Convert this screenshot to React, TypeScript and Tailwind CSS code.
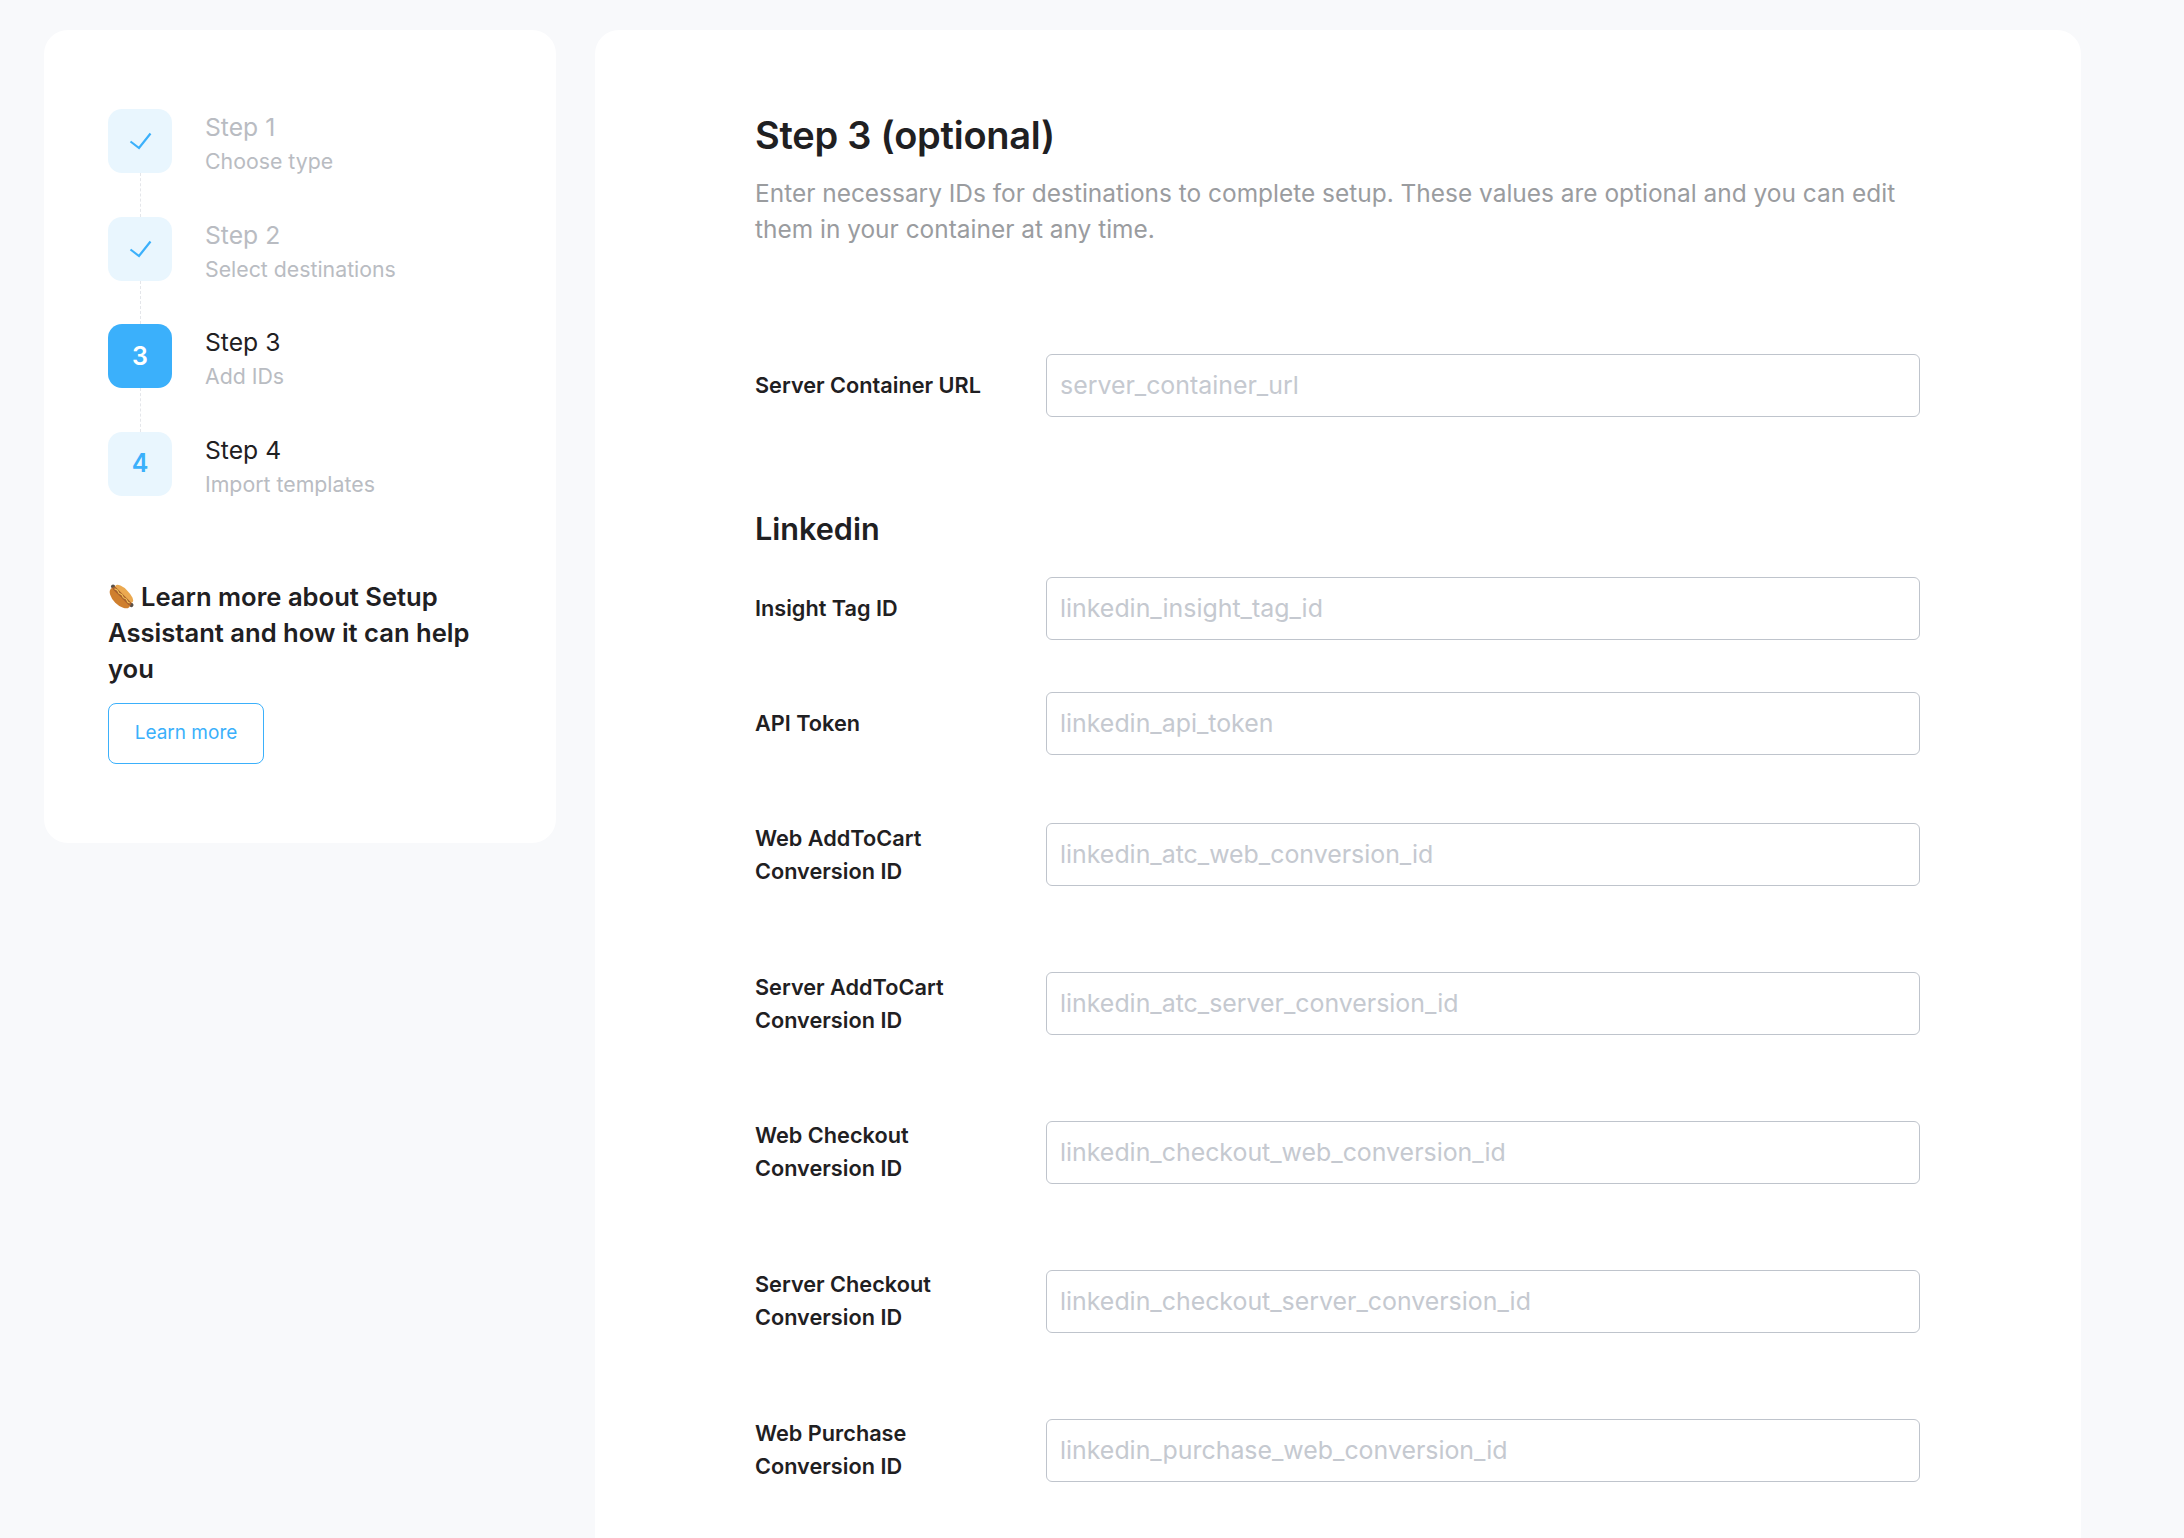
import React from "react";

const steps = [
  { title: "Step 1", sub: "Choose type", state: "done" },
  { title: "Step 2", sub: "Select destinations", state: "done" },
  { title: "Step 3", sub: "Add IDs", state: "active" },
  { title: "Step 4", sub: "Import templates", state: "todo" },
];

const fields = [
  { label: ["Insight Tag ID"], ph: "linkedin_insight_tag_id" },
  { label: ["API Token"], ph: "linkedin_api_token" },
  { label: ["Web AddToCart", "Conversion ID"], ph: "linkedin_atc_web_conversion_id" },
  { label: ["Server AddToCart", "Conversion ID"], ph: "linkedin_atc_server_conversion_id" },
  { label: ["Web Checkout", "Conversion ID"], ph: "linkedin_checkout_web_conversion_id" },
  { label: ["Server Checkout", "Conversion ID"], ph: "linkedin_checkout_server_conversion_id" },
  { label: ["Web Purchase", "Conversion ID"], ph: "linkedin_purchase_web_conversion_id" },
];

function Check() {
  return (
    <svg width="23" height="18" viewBox="0 0 23 18" fill="none">
      <path d="M1.5 9.5L10 16L21.5 1.500" stroke="#3bb0fb" strokeWidth="2.200" />
    </svg>
  );
}

function HotDog() {
  return (
    <svg width="27" height="27" viewBox="0 0 26 26" className="inline-block align-[-4px] mr-[6px]">
      <g transform="rotate(45 13 13)">
        <circle cx="0.500" cy="12" r="2" fill="#5a5148" />
        <circle cx="25.500" cy="12" r="2" fill="#5a5148" />
        <ellipse cx="13" cy="15" rx="12.500" ry="6.500" fill="#cf7f2e" />
        <ellipse cx="13" cy="9.500" rx="11.500" ry="4.500" fill="#eba950" />
        <rect x="1" y="10.500" width="24" height="3.500" rx="1.750" fill="#a9602c" />
        <path d="M3 12.500l3-1 3 1 3-1 3 1 3-1 3 1 2-.7" stroke="#f3c65a" strokeWidth="1" fill="none" />
      </g>
    </svg>
  );
}

function Field({ label, ph }: { label: string[]; ph: string }) {
  return (
    <div className={label.length > 1 ? "flex items-center h-[96.8px]" : "flex items-center h-[63px]"}>
      <div className="w-[291px] shrink-0 text-[21.7px] leading-[33px] font-semibold text-[#1f2022]">
        {label.map((l) => (
          <div key={l}>{l}</div>
        ))}
      </div>
      <input
        readOnly
        placeholder={ph}
        className="w-[874px] h-[63px] rounded-[6px] border border-[#bfc4cc] bg-white px-[13px] pb-[1px] text-[24.9px] outline-none placeholder:text-[#c5c9d0]"
      />
    </div>
  );
}

export default function App() {
  return (
    <div className="h-screen overflow-hidden bg-[#f8f9fb] pt-[30px] pl-[44px] font-['Inter',sans-serif] text-[#1f2022]">
      <div className="flex items-start gap-[39px]">
        <aside className="w-[512px] h-[813px] shrink-0 rounded-[24px] bg-white pt-[79px] pl-[64px] pr-[64px]">
          <div className="flex flex-col">
            {steps.map((s, i) => (
              <div key={s.title} className="flex">
                <div className="flex flex-col items-center w-[64px]">
                  <div
                    className={
                      s.state === "active"
                        ? "w-[64px] h-[64px] rounded-[14px] flex items-center justify-center bg-[#3bb0fb] text-white text-[25px] font-semibold"
                        : "w-[64px] h-[64px] rounded-[14px] flex items-center justify-center bg-[#e9f6fe] text-[#3bb0fb] text-[25px] font-semibold"
                    }
                  >
                    {s.state === "done" ? <Check /> : i + 1}
                  </div>
                  {i < 3 && <div className="h-[43.7px] border-l border-dashed border-[#e4e6ea]" />}
                </div>
                <div className="ml-[33px] h-[64px]">
                  <div className={s.state === "done" ? "text-[24.7px] leading-[36px] text-[#b9bcc2]" : "text-[24.7px] leading-[36px] text-[#1f2022]"}>
                    {s.title}
                  </div>
                  <div className="text-[21.3px] leading-[33px] text-[#b9bcc2]">{s.sub}</div>
                </div>
              </div>
            ))}
          </div>
          <div className="mt-[83px] text-[25.6px] leading-[36px] font-semibold">
            <HotDog />
            Learn more about Setup Assistant and how it can help you
          </div>
          <button className="mt-[16px] w-[156px] h-[61px] rounded-[8px] border border-[#3bb0fb] bg-white text-[19px] text-[#3bb0fb]">
            Learn more
          </button>
        </aside>
        <main className="w-[1486px] shrink-0 rounded-[24px] bg-white pt-[81px] pl-[160px] pb-[100px]">
          <h1 className="text-[38px] leading-[48px] font-semibold tracking-[-0.25px]">Step 3 (optional)</h1>
          <p className="mt-[16px] w-[1180px] text-[24.45px] leading-[36px] text-[#9a9c9f]">
            Enter necessary IDs for destinations to complete setup. These values are optional and you can edit them in your container at any time.
          </p>
          <div className="mt-[107px]">
            <Field label={["Server Container URL"]} ph="server_container_url" />
          </div>
          <h2 className="mt-[92px] text-[30.6px] leading-[40px] font-semibold">Linkedin</h2>
          <div className="mt-[27.5px] flex flex-col gap-[52px]">
            {fields.map((f) => (
              <Field key={f.ph} label={f.label} ph={f.ph} />
            ))}
          </div>
        </main>
      </div>
    </div>
  );
}
